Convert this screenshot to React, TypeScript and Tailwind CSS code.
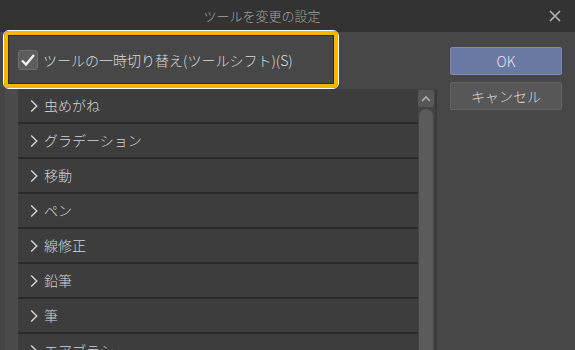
import React from 'react';

const rows = ['虫めがね', 'グラデーション', '移動', 'ペン', '線修正', '鉛筆', '筆', 'エアブラシ'];

const Chevron = () => (
  <svg width="8" height="14" viewBox="0 0 8 14" className="shrink-0">
    <polyline points="1.2,1.5 6.8,7 1.2,12.5" fill="none" stroke="#d6d6d6" strokeWidth="1.4" />
  </svg>
);

const App = () => {
  return (
    <div
      className="flex h-[350px] w-[575px] flex-col overflow-hidden bg-[#474747]"
      style={{ fontFamily: '"Noto Sans CJK JP", "Noto Sans", sans-serif' }}
    >
      {/* title bar */}
      <div className="flex h-8 shrink-0 items-center bg-[#333333]">
        <div className="flex-1 pr-[11px] text-center text-[13px] font-light text-[#a3a3a3]">ツールを変更の設定</div>
        <div className="flex w-[40px] justify-center">
          <svg width="12" height="12" viewBox="0 0 12 12">
            <path d="M1 1 L11 11 M11 1 L1 11" stroke="#b5b5b5" strokeWidth="1.6" />
          </svg>
        </div>
      </div>

      <div className="flex flex-1 flex-row">
        {/* left column */}
        <div className="flex w-[437px] flex-col">
          <div className="relative z-10 ml-[3px] mt-[-2px] h-[59px] w-[336px] rounded-[6px] border border-white">
            <div className="h-full w-full rounded-[5px] border-4 border-[#f7b500]">
              <div className="flex h-full w-full items-center gap-[5px] border border-[#2c2c2c] bg-[#474747] pl-[9px]">
                <div className="flex h-[20px] w-[20px] items-center justify-center rounded-[3px] border border-[#6e6e6e] bg-[#5c5c5c]">
                  <svg width="16" height="14" viewBox="0 0 16 14">
                    <polyline points="2,7.5 6,11.5 14,2" fill="none" stroke="#f2f2f2" strokeWidth="2.4" />
                  </svg>
                </div>
                <span className="text-[14px] font-light leading-none text-[#dcdcdc]">ツールの一時切り替え(ツールシフト)(S)</span>
              </div>
            </div>
          </div>

          <div className="flex flex-1 flex-row">
            <div className="flex w-[18px] flex-row">
              <div className="w-[5px] bg-[#454545]" />
              <div className="flex-1 bg-[#4b4b4b]" />
            </div>
            <div className="flex flex-1 flex-col bg-[#3d3d3d]">
              {rows.map((r) => (
                <div
                  key={r}
                  className="flex h-[35px] shrink-0 items-center gap-[6px] border-b-2 border-[#2a2a2a] pl-[12px] text-[14px] font-light text-[#d4d4d4]"
                >
                  <Chevron />
                  <span>{r}</span>
                </div>
              ))}
            </div>
            <div className="flex w-[17px] flex-col items-start bg-[#444444] pt-[1px]">
              <div className="flex h-[17px] w-[16px] items-center justify-center rounded-[2px] bg-[#575757]">
                <svg width="10" height="6" viewBox="0 0 10 6">
                  <polyline points="1,5 5,1 9,5" fill="none" stroke="#b0b0b0" strokeWidth="1.6" />
                </svg>
              </div>
              <div className="ml-[1px] mt-[2px] w-[14px] flex-1 rounded-t-[7px] bg-[#5b5b5b]" />
            </div>
            <div className="w-[2px] bg-[#3a3a3a]" />
          </div>
        </div>

        {/* right column */}
        <div className="flex flex-1 flex-col gap-[7px] pl-[13px] pt-[15px]">
          <div className="flex h-[28px] w-[112px] items-center justify-center rounded-[2px] border border-[#7d8ab3] bg-[#6979a4] text-[14px] font-light text-[#e6e9f2]">
            OK
          </div>
          <div className="flex h-[28px] w-[112px] items-center justify-center rounded-[2px] border border-[#646464] bg-[#575757] text-[14px] font-light text-[#d6d6d6]">
            キャンセル
          </div>
        </div>
      </div>
    </div>
  );
};

export default App;
